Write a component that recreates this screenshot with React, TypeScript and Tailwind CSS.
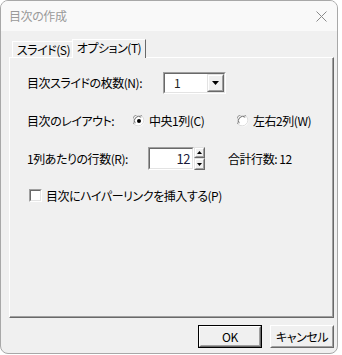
import React from "react";

const font = { fontFamily: "'Noto Sans CJK JP', 'Noto Sans', sans-serif" };

function Sunken({ className = "", children }: { className?: string; children?: React.ReactNode }) {
  return (
    <div className={`border border-t-[#a0a0a0] border-l-[#a0a0a0] border-r-white border-b-white ${className}`}>
      <div className="h-full w-full border border-t-[#696969] border-l-[#696969] border-r-[#e3e3e3] border-b-[#e3e3e3] bg-white flex">
        {children}
      </div>
    </div>
  );
}

function Raised({ className = "", children }: { className?: string; children?: React.ReactNode }) {
  return (
    <div className={`border border-t-[#e3e3e3] border-l-[#e3e3e3] border-r-[#696969] border-b-[#696969] ${className}`}>
      <div className="h-full w-full border border-t-white border-l-white border-r-[#a0a0a0] border-b-[#a0a0a0] bg-[#f0f0f0] flex items-center justify-center">
        {children}
      </div>
    </div>
  );
}

function Radio({ checked }: { checked?: boolean }) {
  return (
    <svg width="12" height="12" viewBox="0 0 12 12" className="shrink-0">
      <circle cx="6" cy="6" r="5.5" fill="#fff" />
      <path d="M1.2 9.2 A5.5 5.5 0 0 1 9.2 1.2" fill="none" stroke="#8c8c8c" strokeWidth="1" />
      <path d="M9.2 1.2 A5.5 5.5 0 0 1 1.2 9.2" fill="none" stroke="#dcdcdc" strokeWidth="1" />
      <path d="M2.2 8.2 A4.3 4.3 0 0 1 8.2 2.2" fill="none" stroke="#6a6a6a" strokeWidth="1" />
      {checked && <circle cx="6" cy="6" r="2" fill="#000" />}
    </svg>
  );
}

function Btn({ children, def }: { children: React.ReactNode; def?: boolean }) {
  if (def) {
    return (
      <div className="w-[64px] h-[23px] border border-black">
        <div className="h-full w-full border border-t-white border-l-white border-r-[#696969] border-b-[#696969]">
          <div className="h-full w-full border border-t-[#f0f0f0] border-l-[#f0f0f0] border-r-[#a0a0a0] border-b-[#a0a0a0] flex items-center justify-center text-[12px] text-black">
            {children}
          </div>
        </div>
      </div>
    );
  }
  return (
    <div className="w-[64px] h-[23px] border border-t-white border-l-white border-r-[#696969] border-b-[#696969]">
      <div className="h-full w-full border border-t-[#f0f0f0] border-l-[#f0f0f0] border-r-[#a0a0a0] border-b-[#a0a0a0] flex items-center justify-center text-[12px] text-black">
        {children}
      </div>
    </div>
  );
}

export default function App() {
  return (
    <div className="w-[342px] h-[355px] bg-white overflow-hidden [font-feature-settings:'palt']" style={font}>
      <div className="w-[338px] h-[354px] border border-[#a8a8a8] rounded-[8px] overflow-hidden flex flex-col bg-[#f0f0f0]">
        {/* title bar */}
        <div className="h-[30px] bg-[#f9f9f9] flex items-center justify-between pl-[8px] pr-[10px] shrink-0">
          <span className="text-[12px] text-[#9a9a9a] tracking-[-0.4px] leading-none">目次の作成</span>
          <svg width="11" height="11" viewBox="0 0 11 11">
            <path d="M0.5 0.5 L10.5 10.5 M10.5 0.5 L0.5 10.5" stroke="#8a8a8a" strokeWidth="1" />
          </svg>
        </div>
        {/* body */}
        <div className="flex-1 flex flex-col pl-[8px] pt-[8px] text-[12px] text-black leading-none tracking-[-0.45px]">
          {/* tabs */}
          <div className="flex items-end h-[18px] ml-[3px] relative z-10">
            <div className="w-[61px] h-[16px] border-l border-t border-l-white border-t-white border-r border-r-[#696969] flex items-center justify-center pl-[2px]">
              スライド(S)
            </div>
            <div className="w-[74px] h-[19px] -ml-[1px] -mb-[1px] bg-[#f0f0f0] border-l border-t border-l-white border-t-white border-r border-r-[#696969] flex items-center justify-center pb-[2px]">
              オプション(T)
            </div>
          </div>
          {/* panel */}
          <div className="w-[325px] h-[261px] border border-t-white border-l-white border-r-[#696969] border-b-[#696969]">
            <div className="h-full w-full border-r border-b border-r-[#a0a0a0] border-b-[#a0a0a0] flex flex-col pl-[17px]">
              {/* row 1 */}
              <div className="flex items-center h-[22px] mt-[14px]">
                <div className="w-[136px]">目次スライドの枚数(N):</div>
                <Sunken className="w-[63px] h-[22px]">
                  <div className="flex-1 flex items-center pl-[9px] text-[#222]">1</div>
                  <Raised className="w-[17px] h-full">
                    <svg width="7" height="4" viewBox="0 0 7 4">
                      <path d="M0 0 H7 L3.5 4 Z" fill="#000" />
                    </svg>
                  </Raised>
                </Sunken>
              </div>
              {/* row 2 */}
              <div className="flex items-center h-[22px] mt-[16px]">
                <div className="w-[106px]">目次のレイアウト:</div>
                <div className="w-[104px] flex items-center gap-[4px]">
                  <Radio checked />
                  <span>中央1列(C)</span>
                </div>
                <div className="flex items-center gap-[4px]">
                  <Radio />
                  <span>左右2列(W)</span>
                </div>
              </div>
              {/* row 3 */}
              <div className="flex items-center h-[23px] mt-[15px]">
                <div className="w-[121px]">1列あたりの行数(R):</div>
                <Sunken className="w-[46px] h-[23px]">
                  <div className="flex-1 flex items-center justify-end pr-[2px] text-[13px] text-[#1a1a3a]">12</div>
                </Sunken>
                <div className="w-[11px] h-[23px] flex flex-col">
                  <Raised className="w-full h-[11px]">
                    <svg width="5" height="3" viewBox="0 0 5 3">
                      <path d="M0 3 H5 L2.5 0 Z" fill="#000" />
                    </svg>
                  </Raised>
                  <Raised className="w-full h-[12px]">
                    <svg width="5" height="3" viewBox="0 0 5 3">
                      <path d="M0 0 H5 L2.5 3 Z" fill="#000" />
                    </svg>
                  </Raised>
                </div>
                <div className="ml-[23px]">合計行数: 12</div>
              </div>
              {/* row 4 */}
              <div className="flex items-center h-[13px] mt-[19px] ml-[2px]">
                <div className="w-[13px] h-[13px] border border-t-[#a0a0a0] border-l-[#a0a0a0] border-r-white border-b-white">
                  <div className="w-full h-full border border-t-[#696969] border-l-[#696969] border-r-[#e3e3e3] border-b-[#e3e3e3] bg-white" />
                </div>
                <span className="ml-[4px]">目次にハイパーリンクを挿入する(P)</span>
              </div>
            </div>
          </div>
          {/* buttons */}
          <div className="w-[325px] flex justify-end gap-[8px] mt-[7px]">
            <Btn def>OK</Btn>
            <Btn>キャンセル</Btn>
          </div>
        </div>
      </div>
    </div>
  );
}
